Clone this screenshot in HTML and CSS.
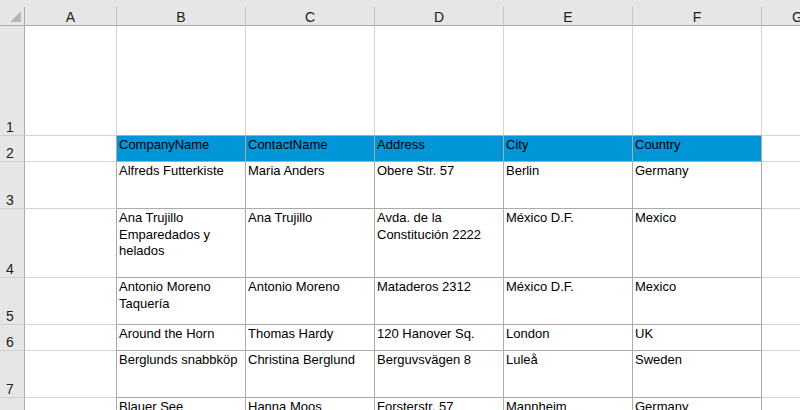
FILE: index.html
```html
<!DOCTYPE html>
<html lang="en">

<head>
    <meta charset="UTF-8">
    <meta name="viewport" content="width=device-width, initial-scale=1.0">
    <title>Customers - Sheet1</title>
    <link rel="stylesheet" href="styles.css">
</head>

<body>
    <div class="sheet">
        <!-- column letters -->
        <div class="corner">
            <div class="corner-in">
                <svg width="12" height="12" viewBox="0 0 12 12">
                    <polygon points="11,0 11,11 0,11" fill="#b6b6b6" />
                </svg>
            </div>
        </div>
        <div class="colhead"><div class="lbl">A</div></div>
        <div class="colhead"><div class="lbl">B</div></div>
        <div class="colhead"><div class="lbl">C</div></div>
        <div class="colhead"><div class="lbl">D</div></div>
        <div class="colhead"><div class="lbl">E</div></div>
        <div class="colhead"><div class="lbl">F</div></div>
        <div class="colhead"><div class="lbl">G</div></div>

        <!-- row 1 -->
        <div class="rowhead">1</div>
        <div class="cell"></div>
        <div class="cell above"></div>
        <div class="cell above"></div>
        <div class="cell above"></div>
        <div class="cell above"></div>
        <div class="cell above"></div>
        <div class="cell"></div>

        <!-- row 2 -->
        <div class="rowhead">2</div>
        <div class="cell edge"></div>
        <div class="cell tbl hdr">CompanyName</div>
        <div class="cell tbl hdr">ContactName</div>
        <div class="cell tbl hdr">Address</div>
        <div class="cell tbl hdr">City</div>
        <div class="cell tbl hdr">Country</div>
        <div class="cell"></div>

        <!-- row 3 -->
        <div class="rowhead">3</div>
        <div class="cell edge"></div>
        <div class="cell tbl">Alfreds Futterkiste</div>
        <div class="cell tbl">Maria Anders</div>
        <div class="cell tbl">Obere Str. 57</div>
        <div class="cell tbl">Berlin</div>
        <div class="cell tbl">Germany</div>
        <div class="cell"></div>

        <!-- row 4 -->
        <div class="rowhead">4</div>
        <div class="cell edge"></div>
        <div class="cell tbl">Ana Trujillo Emparedados y helados</div>
        <div class="cell tbl">Ana Trujillo</div>
        <div class="cell tbl">Avda. de la Constitución 2222</div>
        <div class="cell tbl">México D.F.</div>
        <div class="cell tbl">Mexico</div>
        <div class="cell"></div>

        <!-- row 5 -->
        <div class="rowhead">5</div>
        <div class="cell edge"></div>
        <div class="cell tbl">Antonio Moreno Taquería</div>
        <div class="cell tbl">Antonio Moreno</div>
        <div class="cell tbl">Mataderos 2312</div>
        <div class="cell tbl">México D.F.</div>
        <div class="cell tbl">Mexico</div>
        <div class="cell"></div>

        <!-- row 6 -->
        <div class="rowhead">6</div>
        <div class="cell edge"></div>
        <div class="cell tbl">Around the Horn</div>
        <div class="cell tbl">Thomas Hardy</div>
        <div class="cell tbl">120 Hanover Sq.</div>
        <div class="cell tbl">London</div>
        <div class="cell tbl">UK</div>
        <div class="cell"></div>

        <!-- row 7 -->
        <div class="rowhead">7</div>
        <div class="cell edge"></div>
        <div class="cell tbl">Berglunds snabbköp</div>
        <div class="cell tbl">Christina Berglund</div>
        <div class="cell tbl">Berguvsvägen 8</div>
        <div class="cell tbl">Luleå</div>
        <div class="cell tbl">Sweden</div>
        <div class="cell"></div>

        <!-- row 8 -->
        <div class="rowhead">8</div>
        <div class="cell edge"></div>
        <div class="cell tbl">Blauer See Delikatessen</div>
        <div class="cell tbl">Hanna Moos</div>
        <div class="cell tbl">Forsterstr. 57</div>
        <div class="cell tbl">Mannheim</div>
        <div class="cell tbl">Germany</div>
        <div class="cell"></div>
    </div>
</body>

</html>
```

FILE: styles.css
```css
body {
    margin: 0;
    background-color: #ffffff;
    overflow: hidden;
    font-family: "Liberation Sans", Arial, sans-serif;
    color: #000000;
}

.sheet {
    display: grid;
    grid-template-columns: 25px 92px repeat(5, 129px) 72px;
    grid-template-rows: 26px 110px 26px 47px 69px 47px 26px 47px 47px;
    width: 832px;
}

.sheet > div {
    box-sizing: border-box;
}

/* header band */
.corner,
.colhead {
    background-color: #e6e6e6;
    border-bottom: 1px solid #ababab;
    padding-top: 7px;
    display: flex;
    flex-direction: column;
}

.corner-in {
    flex: 1;
    border-right: 1px solid #ababab;
    display: flex;
    align-items: flex-end;
    justify-content: flex-end;
    padding: 0 2px 2px 0;
}

.corner-in svg {
    display: block;
}

.lbl {
    flex: 1;
    border-right: 1px solid #c4c4c4;
    text-align: center;
    font-size: 14px;
    line-height: 20px;
    color: #222222;
}

.rowhead {
    background-color: #e6e6e6;
    border-right: 1px solid #ababab;
    border-bottom: 1px solid #d0d0d0;
    display: flex;
    align-items: flex-end;
    padding-left: 6px;
    font-size: 14px;
    line-height: 16px;
    color: #222222;
    overflow: hidden;
}

/* cells */
.cell {
    border-right: 1px solid #d4d4d4;
    border-bottom: 1px solid #d4d4d4;
    padding: 1px 2px 0;
    font-size: 13px;
    line-height: 16.7px;
    overflow: hidden;
}

.cell.edge {
    border-right-color: #ababab;
}

.cell.above {
    border-bottom-color: #ababab;
}

.cell.tbl {
    border-right-color: #ababab;
    border-bottom-color: #ababab;
}

.cell.hdr {
    background-color: #0096d8;
}
```
